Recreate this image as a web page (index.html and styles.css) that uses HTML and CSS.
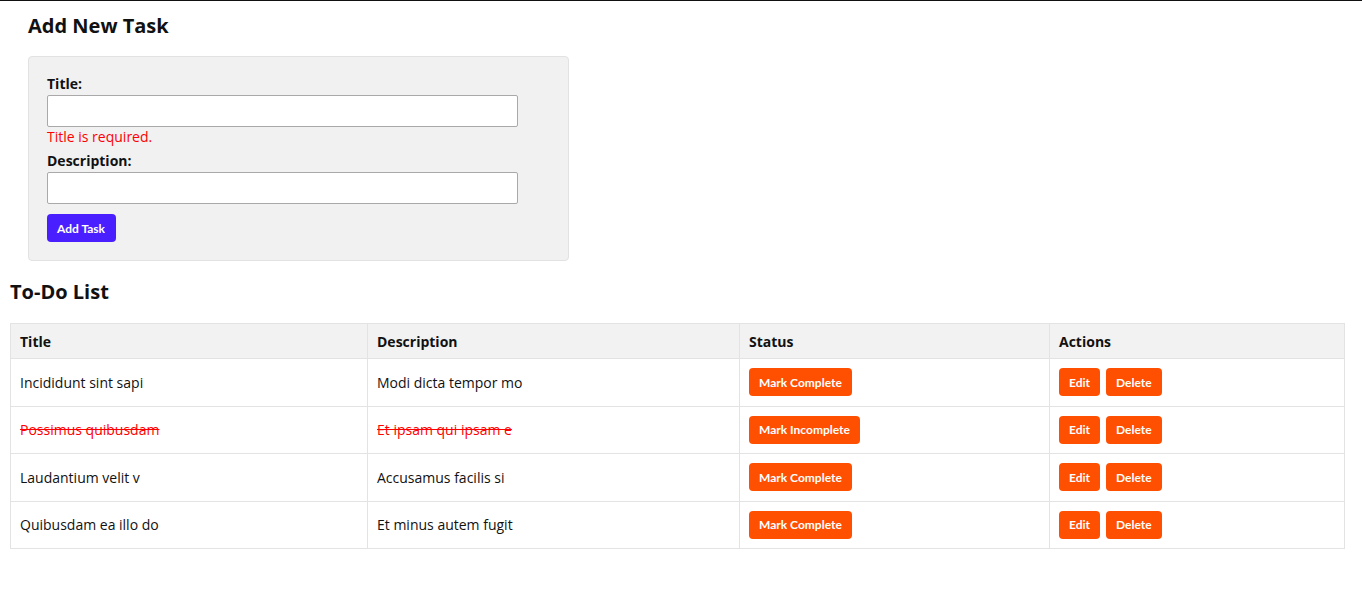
FILE: index.html
```html
<!DOCTYPE html>
<html>
<head>
<meta charset="utf-8">
<link rel="stylesheet" href="styles.css">
</head>
<body>
<div class="app">
  <section class="add-section">
    <h2 class="heading">Add New Task</h2>
    <form class="task-form">
      <div class="field">
        <label class="label">Title:</label>
        <input class="input" type="text">
        <div class="error">Title is required.</div>
      </div>
      <div class="field">
        <label class="label">Description:</label>
        <input class="input" type="text">
      </div>
      <button type="button" class="btn btn-primary">Add Task</button>
    </form>
  </section>
  <section class="list-section">
    <h2 class="heading">To-Do List</h2>
    <table class="tasks">
      <colgroup>
        <col class="c1"><col class="c2"><col class="c3"><col class="c4">
      </colgroup>
      <thead>
        <tr><th>Title</th><th>Description</th><th>Status</th><th>Actions</th></tr>
      </thead>
      <tbody>
        <tr>
          <td>Incididunt sint sapi</td><td>Modi dicta tempor mo</td>
          <td><button class="btn btn-orange">Mark Complete</button></td>
          <td><div class="actions"><button class="btn btn-orange">Edit</button><button class="btn btn-orange">Delete</button></div></td>
        </tr>
        <tr class="done">
          <td>Possimus quibusdam</td><td>Et ipsam qui ipsam e</td>
          <td><button class="btn btn-orange">Mark Incomplete</button></td>
          <td><div class="actions"><button class="btn btn-orange">Edit</button><button class="btn btn-orange">Delete</button></div></td>
        </tr>
        <tr>
          <td>Laudantium velit v</td><td>Accusamus facilis si</td>
          <td><button class="btn btn-orange">Mark Complete</button></td>
          <td><div class="actions"><button class="btn btn-orange">Edit</button><button class="btn btn-orange">Delete</button></div></td>
        </tr>
        <tr>
          <td>Quibusdam ea illo do</td><td>Et minus autem fugit</td>
          <td><button class="btn btn-orange">Mark Complete</button></td>
          <td><div class="actions"><button class="btn btn-orange">Edit</button><button class="btn btn-orange">Delete</button></div></td>
        </tr>
      </tbody>
    </table>
  </section>
</div>
</body>
</html>
```
FILE: styles.css
```css
* { box-sizing: border-box; }
html, body { margin: 0; padding: 0; background: #fff; }
body {
  font-family: "Open Sans", "Lato", sans-serif;
  color: #111;
  border-top: 1px solid #111;
}
.app { padding: 0 17px 0 10px; }
.heading {
  margin: 0;
  font-size: 20px;
  font-weight: 700;
  line-height: 24px;
}
.add-section { padding: 13px 0 0 18px; }
.task-form {
  margin-top: 18px;
  width: 541px;
  background: #f1f1f1;
  border: 1px solid #e2e2e2;
  border-radius: 4px;
  padding: 18px;
}
.field { margin-bottom: 8px; }
.label {
  display: block;
  font-size: 14px;
  font-weight: 700;
  line-height: 17px;
  margin-bottom: 3px;
}
.input {
  display: block;
  width: 471px;
  height: 32px;
  border: 1px solid #a9a9a9;
  border-radius: 2px;
  background: #fff;
  font: inherit;
  padding: 0 6px;
}
.error {
  color: #ff0000;
  font-size: 14px;
  line-height: 17px;
  padding-top: 1px;
  margin-bottom: -1px;
}
.btn {
  border: none;
  border-radius: 4px;
  color: #fff;
  font-family: "Lato", sans-serif;
  font-weight: 700;
  font-size: 12px;
  height: 28px;
  padding: 0 10px;
  cursor: pointer;
}
.btn-primary { background: #4a1fff; margin-top: 2px; padding: 0 11px 0 10px; }
.btn-orange { background: #ff4f00; }
.list-section { padding-top: 19px; }
.list-section .heading { margin-bottom: 19px; }
.tasks {
  width: 1335px;
  border-collapse: collapse;
  font-size: 14px;
}
.c1 { width: 357px; }
.c2 { width: 372px; }
.c3 { width: 310px; }
.tasks th, .tasks td {
  border: 1px solid #e3e3e3;
  text-align: left;
  padding: 0 9px;
}
.tasks th {
  background: #f2f2f2;
  font-weight: 700;
  height: 35px;
}
.tasks td { height: 47.5px; }
.done td:nth-child(1), .done td:nth-child(2) {
  color: #ff0000;
  text-decoration: line-through;
}
.actions { display: flex; gap: 6px; }
```
